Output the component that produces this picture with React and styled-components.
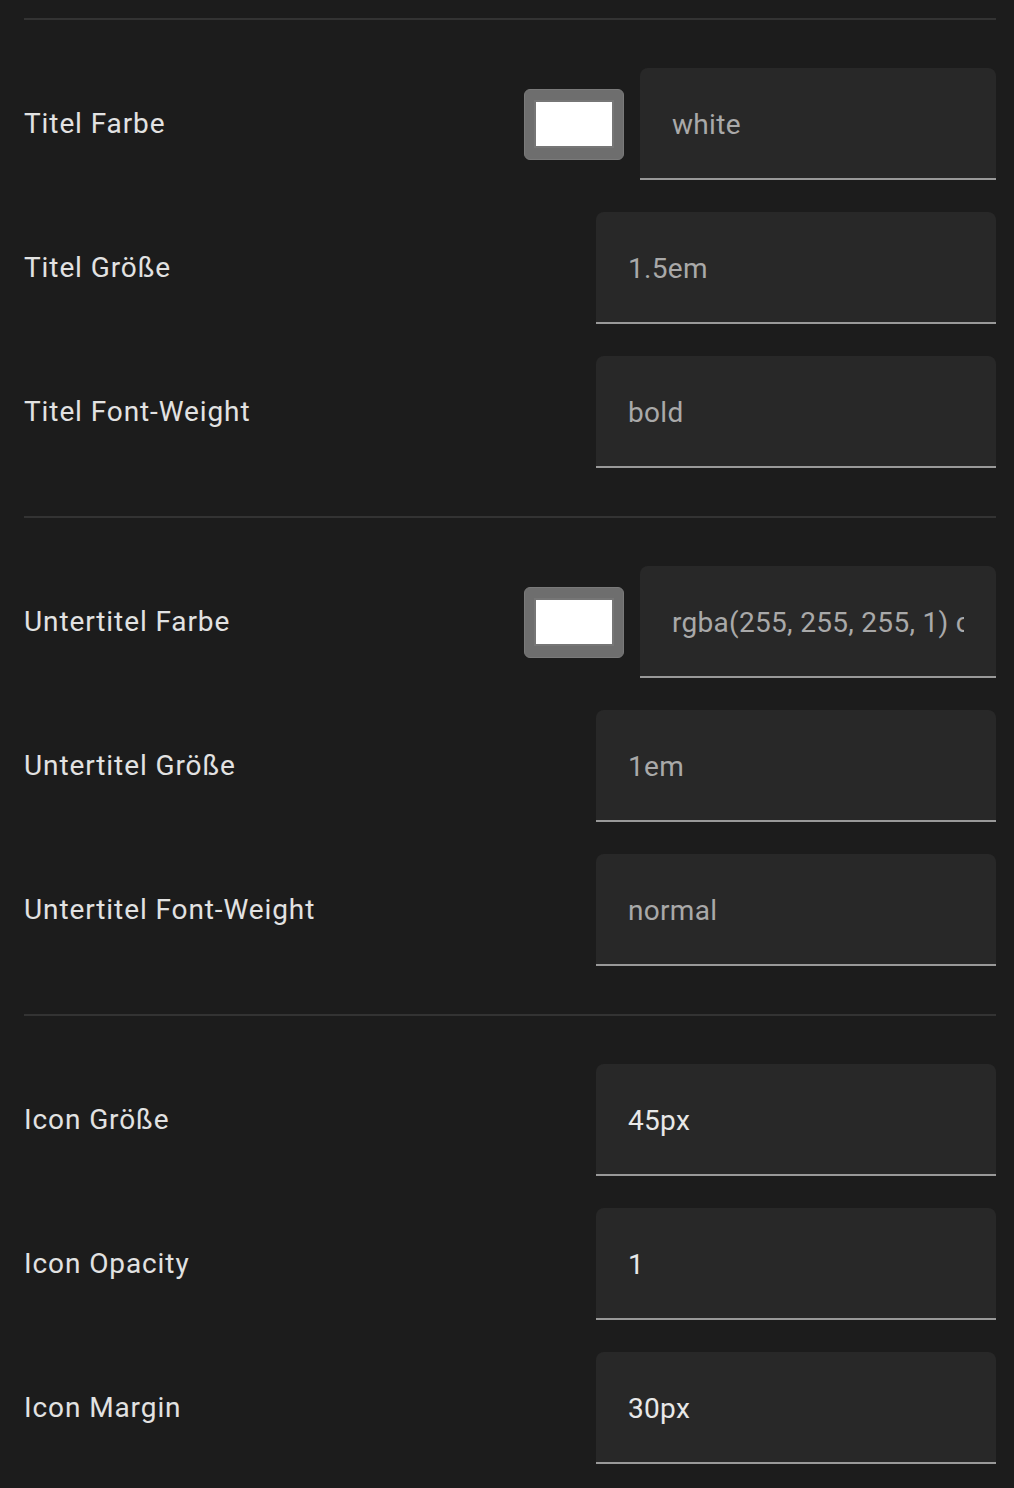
import React from "react";
import styled, { createGlobalStyle } from "styled-components";

const Global = createGlobalStyle`
  html, body { margin: 0; padding: 0; background: #1c1c1c; }
  body { font-family: Roboto, "Noto Sans", "Liberation Sans", sans-serif; }
  * { box-sizing: border-box; }
`;

const Page = styled.div`
  width: 1014px;
  min-height: 1488px;
  background: #1c1c1c;
  padding: 18px 18px 0 24px;
  display: flex;
  flex-direction: column;
`;

const Divider = styled.div`
  height: 2px;
  background: #333333;
`;

const Group = styled.div`
  display: flex;
  flex-direction: column;
  gap: 32px;
  padding: 48px 0 48px;
`;

const Row = styled.div`
  height: 112px;
  display: flex;
  align-items: center;
  justify-content: space-between;
`;

const Label = styled.div`
  color: #e2e2e2;
  font-size: 28px;
  letter-spacing: 0.9px;
  font-weight: 400;
  margin-top: -2px;
`;

const Controls = styled.div`
  display: flex;
  align-items: center;
  gap: 16px;
`;

const Swatch = styled.div`
  width: 100px;
  height: 71px;
  border-radius: 6px;
  background: #6e6e6e;
  border: 1px solid #7a7a7a;
  display: flex;
  align-items: center;
  justify-content: center;
`;

const SwatchInner = styled.div`
  width: 80px;
  height: 48px;
  background: ${(p) => p.$color};
  border: 2px solid #767676;
`;

const Field = styled.div`
  width: ${(p) => p.$width}px;
  height: 112px;
  background: #282828;
  border-radius: 8px 8px 0 0;
  border-bottom: 2px solid #999999;
  display: flex;
  align-items: center;
  padding: 2px 32px 0;
  overflow: hidden;
`;

const Value = styled.span`
  font-size: 28px;
  letter-spacing: 0.3px;
  color: ${(p) => (p.$dim ? "#a9a9a9" : "#e8e8e8")};
  white-space: nowrap;
  overflow: hidden;
  display: block;
  width: 100%;
`;

const groups = [
  [
    { label: "Titel Farbe", value: "white", color: "#ffffff", dim: true },
    { label: "Titel Größe", value: "1.5em", dim: true },
    { label: "Titel Font-Weight", value: "bold", dim: true },
  ],
  [
    { label: "Untertitel Farbe", value: "rgba(255, 255, 255, 1) check", color: "#ffffff", dim: true },
    { label: "Untertitel Größe", value: "1em", dim: true },
    { label: "Untertitel Font-Weight", value: "normal", dim: true },
  ],
  [
    { label: "Icon Größe", value: "45px" },
    { label: "Icon Opacity", value: "1" },
    { label: "Icon Margin", value: "30px" },
  ],
];

export default function App() {
  return (
    <>
      <Global />
      <Page>
        {groups.map((g, gi) => (
          <React.Fragment key={gi}>
            <Divider />
            <Group>
              {g.map((r) => (
                <Row key={r.label}>
                  <Label>{r.label}</Label>
                  <Controls>
                    {r.color && (
                      <Swatch>
                        <SwatchInner $color={r.color} />
                      </Swatch>
                    )}
                    <Field $width={r.color ? 356 : 400}>
                      <Value $dim={r.dim}>{r.value}</Value>
                    </Field>
                  </Controls>
                </Row>
              ))}
            </Group>
          </React.Fragment>
        ))}
      </Page>
    </>
  );
}
